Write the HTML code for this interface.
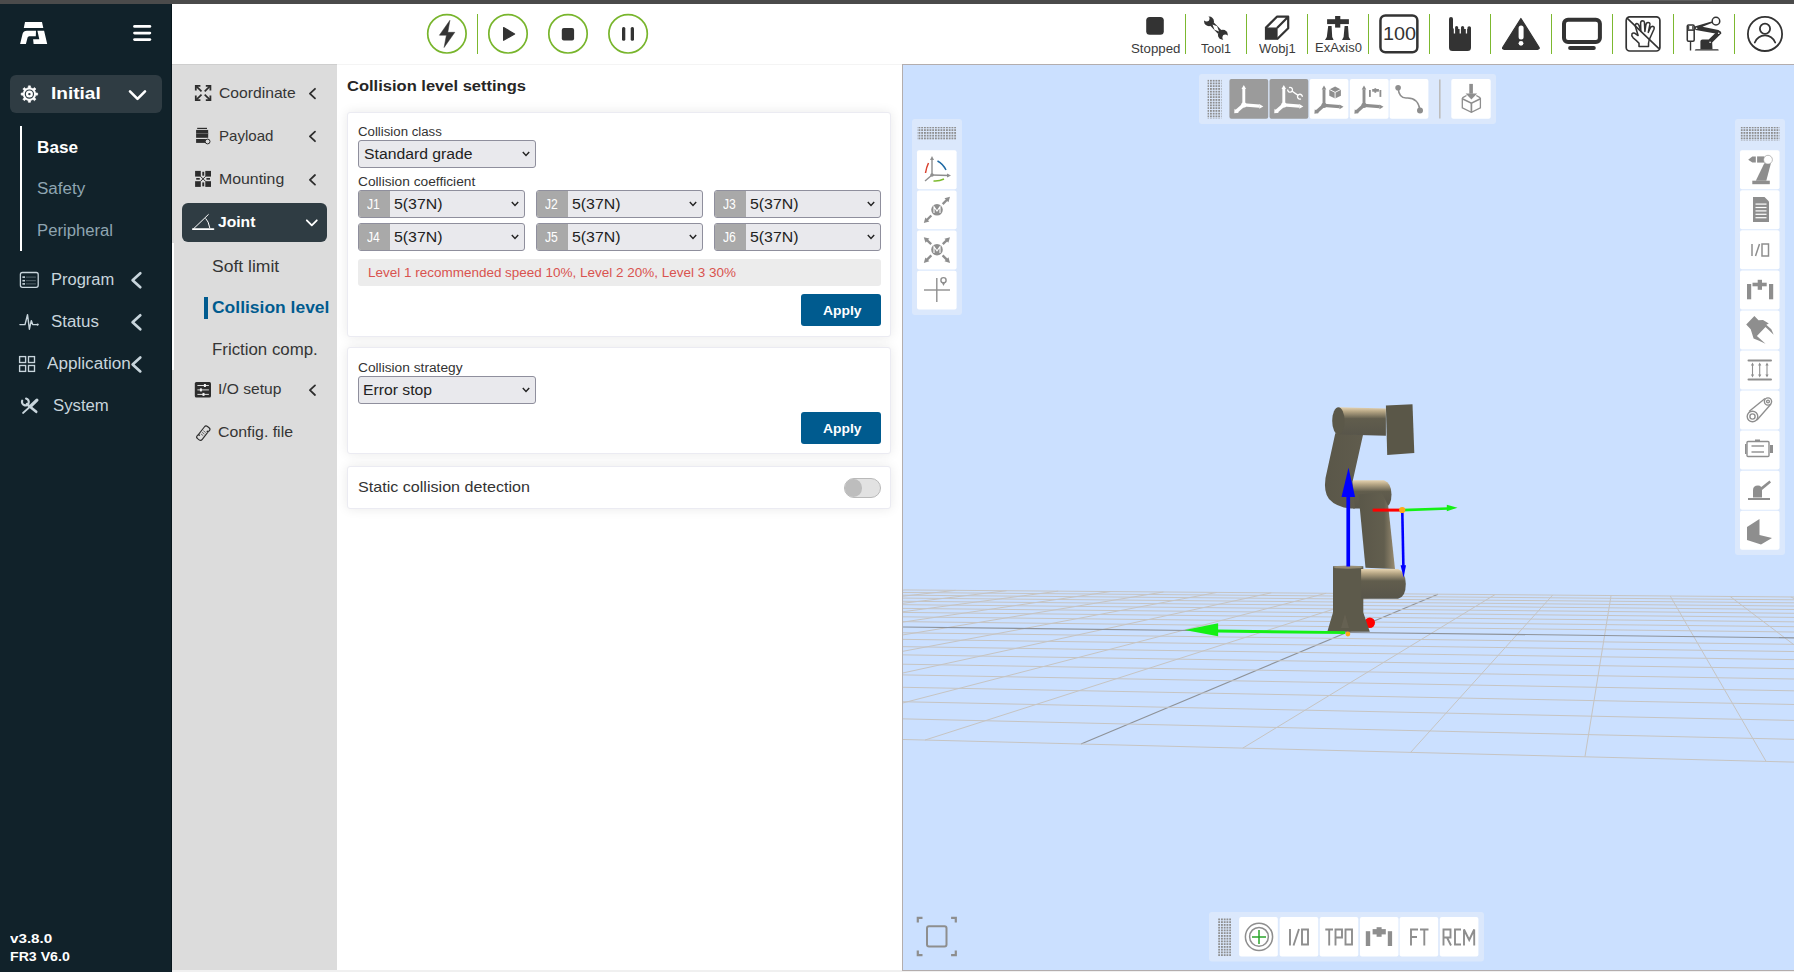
<!DOCTYPE html><html><head><meta charset="utf-8"><style>
*{margin:0;padding:0;box-sizing:border-box}
html,body{width:1794px;height:972px;overflow:hidden;background:#fff;font-family:"Liberation Sans",sans-serif}
.a{position:absolute}
.t{position:absolute;white-space:nowrap;line-height:1;transform-origin:0 0}
svg{position:absolute;overflow:visible}
</style></head><body>
<div class="a" style="left:0;top:0;width:1794px;height:4px;background:#4b4b4b"></div>
<div class="a" style="left:1630px;top:0;width:82px;height:1px;background:#5e5e5e"></div>
<div class="a" style="left:0;top:4px;width:172px;height:968px;background:#11222a"></div>
<div class="a" style="left:171px;top:4px;width:1px;height:968px;background:#07151c"></div>
<div class="a" style="left:337px;top:64px;width:565px;height:1px;background:#f4f4f4"></div>
<div class="a" style="left:172px;top:64px;width:165px;height:906px;background:#dcdcdc;border-top:1px solid #cecece"></div>
<div class="a" style="left:172px;top:243px;width:2px;height:127px;background:#fff"></div>
<div class="a" style="left:172px;top:970px;width:1622px;height:2px;background:#f0f0f0"></div>
<div class="a" style="left:902px;top:64px;width:892px;height:907px;background:#cbe0ff;border-left:1px solid #b3adad;border-top:1px solid #b3adad;border-bottom:1px solid #b3adad"></div>
<div class="a" style="left:10px;top:75px;width:152px;height:38px;background:#2f3c43;border-radius:6px"></div>
<div class="t" style="left:51px;top:84.71px;font-size:17px;color:#fff;font-weight:bold;transform:scaleX(1.1199);">Initial</div>
<div class="a" style="left:20px;top:126px;width:2px;height:125px;background:#fff"></div>
<div class="t" style="left:37.4px;top:139.03px;font-size:16.5px;color:#fff;font-weight:bold;transform:scaleX(1.0392);">Base</div>
<div class="t" style="left:37.4px;top:180.96px;font-size:16px;color:#8fa5b1;font-weight:normal;transform:scaleX(1.0624);">Safety</div>
<div class="t" style="left:37.4px;top:222.76px;font-size:16px;color:#8fa5b1;font-weight:normal;transform:scaleX(1.0429);">Peripheral</div>
<div class="t" style="left:51.3px;top:271.56px;font-size:16px;color:#c8d5dc;font-weight:normal;transform:scaleX(1.0309);">Program</div>
<div class="t" style="left:51.3px;top:313.56px;font-size:16px;color:#c8d5dc;font-weight:normal;transform:scaleX(1.0556);">Status</div>
<div class="t" style="left:46.9px;top:355.56px;font-size:16px;color:#c8d5dc;font-weight:normal;transform:scaleX(1.0705);">Application</div>
<div class="t" style="left:53px;top:397.56px;font-size:16px;color:#c8d5dc;font-weight:normal;transform:scaleX(1.0455);">System</div>
<div class="t" style="left:10px;top:932.94px;font-size:12px;color:#fff;font-weight:bold;transform:scaleX(1.2663);">v3.8.0</div>
<div class="t" style="left:10px;top:950.64px;font-size:12px;color:#fff;font-weight:bold;transform:scaleX(1.1792);">FR3 V6.0</div>
<div class="t" style="left:218.5px;top:86.23px;font-size:14.5px;color:#353535;font-weight:normal;transform:scaleX(1.0812);">Coordinate</div>
<div class="t" style="left:218.5px;top:128.73px;font-size:14.5px;color:#353535;font-weight:normal;transform:scaleX(1.0391);">Payload</div>
<div class="t" style="left:218.5px;top:171.93px;font-size:14.5px;color:#353535;font-weight:normal;transform:scaleX(1.0931);">Mounting</div>
<div class="a" style="left:182px;top:203px;width:145px;height:39px;background:#2f3c43;border-radius:6px"></div>
<div class="t" style="left:218px;top:215.03px;font-size:14.5px;color:#fff;font-weight:bold;transform:scaleX(1.0795);">Joint</div>
<div class="t" style="left:211.5px;top:259.26px;font-size:16px;color:#353535;font-weight:normal;transform:scaleX(1.0959);">Soft limit</div>
<div class="a" style="left:204px;top:297px;width:4px;height:22px;background:#005b8f"></div>
<div class="t" style="left:211.5px;top:300.46px;font-size:16px;color:#005b8f;font-weight:bold;transform:scaleX(1.0913);">Collision level</div>
<div class="t" style="left:211.5px;top:342.36px;font-size:16px;color:#353535;font-weight:normal;transform:scaleX(1.0529);">Friction comp.</div>
<div class="t" style="left:218.4px;top:382.13px;font-size:14.5px;color:#353535;font-weight:normal;transform:scaleX(1.0773);">I/O setup</div>
<div class="t" style="left:218.4px;top:425.13px;font-size:14.5px;color:#353535;font-weight:normal;transform:scaleX(1.0948);">Config. file</div>
<div class="t" style="left:347.4px;top:79.15px;font-size:14px;color:#262626;font-weight:bold;transform:scaleX(1.1796);">Collision level settings</div>
<div class="a" style="left:347px;top:112px;width:544px;height:225px;background:#fff;border-radius:3px;border:1px solid #ebebf2;box-shadow:0 0 12px rgba(0,0,0,0.09)"></div>
<div class="a" style="left:347px;top:347px;width:544px;height:107px;background:#fff;border-radius:3px;border:1px solid #ebebf2;box-shadow:0 0 12px rgba(0,0,0,0.09)"></div>
<div class="a" style="left:347px;top:466px;width:544px;height:43px;background:#fff;border-radius:3px;border:1px solid #ebebf2;box-shadow:0 0 12px rgba(0,0,0,0.09)"></div>
<div class="t" style="left:358.4px;top:125.74px;font-size:12px;color:#333;font-weight:normal;transform:scaleX(1.1025);">Collision class</div>
<div class="a" style="left:358px;top:140px;width:178px;height:28px;background:#e9e9ed;border:1px solid #8f8f9d;border-radius:3px"></div>
<div class="t" style="left:363.5px;top:147.15px;font-size:14px;color:#222;font-weight:normal;transform:scaleX(1.1251);">Standard grade</div>
<svg style="left:522px;top:151.0px" width="8" height="6"><path d="M0.8 1 L4 4.5 L7.2 1" fill="none" stroke="#222" stroke-width="1.4"/></svg>
<div class="t" style="left:358.4px;top:175.54px;font-size:12px;color:#333;font-weight:normal;transform:scaleX(1.1440);">Collision coefficient</div>
<div class="a" style="left:358px;top:190px;width:167px;height:28px;background:#e9e9ed;border:1px solid #8f8f9d;border-radius:3px;overflow:hidden"><div class="a" style="left:0;top:0;width:31px;height:28px;background:#a9a9a9"></div></div>
<div class="t" style="left:367px;top:197.15px;font-size:14px;color:#fff;font-weight:normal;transform:scaleX(0.8685);">J1</div>
<div class="t" style="left:394px;top:197.15px;font-size:14px;color:#222;font-weight:normal;transform:scaleX(1.1335);">5(37N)</div>
<svg style="left:511px;top:201px" width="8" height="6"><path d="M0.8 1 L4 4.5 L7.2 1" fill="none" stroke="#222" stroke-width="1.4"/></svg>
<div class="a" style="left:536px;top:190px;width:167px;height:28px;background:#e9e9ed;border:1px solid #8f8f9d;border-radius:3px;overflow:hidden"><div class="a" style="left:0;top:0;width:31px;height:28px;background:#a9a9a9"></div></div>
<div class="t" style="left:545px;top:197.15px;font-size:14px;color:#fff;font-weight:normal;transform:scaleX(0.8685);">J2</div>
<div class="t" style="left:572px;top:197.15px;font-size:14px;color:#222;font-weight:normal;transform:scaleX(1.1335);">5(37N)</div>
<svg style="left:689px;top:201px" width="8" height="6"><path d="M0.8 1 L4 4.5 L7.2 1" fill="none" stroke="#222" stroke-width="1.4"/></svg>
<div class="a" style="left:714px;top:190px;width:167px;height:28px;background:#e9e9ed;border:1px solid #8f8f9d;border-radius:3px;overflow:hidden"><div class="a" style="left:0;top:0;width:31px;height:28px;background:#a9a9a9"></div></div>
<div class="t" style="left:723px;top:197.15px;font-size:14px;color:#fff;font-weight:normal;transform:scaleX(0.8685);">J3</div>
<div class="t" style="left:750px;top:197.15px;font-size:14px;color:#222;font-weight:normal;transform:scaleX(1.1335);">5(37N)</div>
<svg style="left:867px;top:201px" width="8" height="6"><path d="M0.8 1 L4 4.5 L7.2 1" fill="none" stroke="#222" stroke-width="1.4"/></svg>
<div class="a" style="left:358px;top:223px;width:167px;height:28px;background:#e9e9ed;border:1px solid #8f8f9d;border-radius:3px;overflow:hidden"><div class="a" style="left:0;top:0;width:31px;height:28px;background:#a9a9a9"></div></div>
<div class="t" style="left:367px;top:230.15px;font-size:14px;color:#fff;font-weight:normal;transform:scaleX(0.8685);">J4</div>
<div class="t" style="left:394px;top:230.15px;font-size:14px;color:#222;font-weight:normal;transform:scaleX(1.1335);">5(37N)</div>
<svg style="left:511px;top:234px" width="8" height="6"><path d="M0.8 1 L4 4.5 L7.2 1" fill="none" stroke="#222" stroke-width="1.4"/></svg>
<div class="a" style="left:536px;top:223px;width:167px;height:28px;background:#e9e9ed;border:1px solid #8f8f9d;border-radius:3px;overflow:hidden"><div class="a" style="left:0;top:0;width:31px;height:28px;background:#a9a9a9"></div></div>
<div class="t" style="left:545px;top:230.15px;font-size:14px;color:#fff;font-weight:normal;transform:scaleX(0.8685);">J5</div>
<div class="t" style="left:572px;top:230.15px;font-size:14px;color:#222;font-weight:normal;transform:scaleX(1.1335);">5(37N)</div>
<svg style="left:689px;top:234px" width="8" height="6"><path d="M0.8 1 L4 4.5 L7.2 1" fill="none" stroke="#222" stroke-width="1.4"/></svg>
<div class="a" style="left:714px;top:223px;width:167px;height:28px;background:#e9e9ed;border:1px solid #8f8f9d;border-radius:3px;overflow:hidden"><div class="a" style="left:0;top:0;width:31px;height:28px;background:#a9a9a9"></div></div>
<div class="t" style="left:723px;top:230.15px;font-size:14px;color:#fff;font-weight:normal;transform:scaleX(0.8685);">J6</div>
<div class="t" style="left:750px;top:230.15px;font-size:14px;color:#222;font-weight:normal;transform:scaleX(1.1335);">5(37N)</div>
<svg style="left:867px;top:234px" width="8" height="6"><path d="M0.8 1 L4 4.5 L7.2 1" fill="none" stroke="#222" stroke-width="1.4"/></svg>
<div class="a" style="left:358px;top:259px;width:523px;height:27px;background:#ececec;border-radius:3px"></div>
<div class="t" style="left:368.1px;top:266.62px;font-size:12.5px;color:#d9534f;font-weight:normal;transform:scaleX(1.0784);">Level 1 recommended speed 10%, Level 2 20%, Level 3 30%</div>
<div class="a" style="left:801px;top:294px;width:80px;height:32px;background:#005b8f;border-radius:3px"></div>
<div class="t" style="left:822.5px;top:304.17px;font-size:13.5px;color:#fff;font-weight:bold;transform:scaleX(1.0254);">Apply</div>
<div class="t" style="left:358.4px;top:362.04px;font-size:12px;color:#333;font-weight:normal;transform:scaleX(1.1443);">Collision strategy</div>
<div class="a" style="left:358px;top:376px;width:178px;height:28px;background:#e9e9ed;border:1px solid #8f8f9d;border-radius:3px"></div>
<div class="t" style="left:363.4px;top:382.55px;font-size:14px;color:#222;font-weight:normal;transform:scaleX(1.1242);">Error stop</div>
<svg style="left:522px;top:387.0px" width="8" height="6"><path d="M0.8 1 L4 4.5 L7.2 1" fill="none" stroke="#222" stroke-width="1.4"/></svg>
<div class="a" style="left:801px;top:412px;width:80px;height:32px;background:#005b8f;border-radius:3px"></div>
<div class="t" style="left:822.5px;top:421.97px;font-size:13.5px;color:#fff;font-weight:bold;transform:scaleX(1.0254);">Apply</div>
<div class="t" style="left:358.4px;top:478.90px;font-size:15px;color:#333;font-weight:normal;transform:scaleX(1.0739);">Static collision detection</div>
<div class="a" style="left:844px;top:478px;width:37px;height:20px;background:#e2e2e2;border:1px solid #b9b9b9;border-radius:10px"></div>
<div class="a" style="left:845px;top:479px;width:17px;height:18px;background:#bdbdbd;border-radius:9px"></div>
<div class="t" style="left:1130.6px;top:42.74px;font-size:12px;color:#3a3a3a;font-weight:normal;transform:scaleX(1.1053);">Stopped</div>
<div class="t" style="left:1201.2px;top:42.74px;font-size:12px;color:#3a3a3a;font-weight:normal;transform:scaleX(1.0486);">Tool1</div>
<div class="t" style="left:1258.8px;top:42.74px;font-size:12px;color:#3a3a3a;font-weight:normal;transform:scaleX(1.0832);">Wobj1</div>
<div class="t" style="left:1315.2px;top:42.44px;font-size:12px;color:#3a3a3a;font-weight:normal;transform:scaleX(1.0819);">ExAxis0</div>
<div class="t" style="left:1383px;top:26.39px;font-size:17.5px;color:#333;font-weight:normal;transform:scaleX(1.1330);">100</div>
<div class="a" style="left:1184.9px;top:14px;width:1.3px;height:40px;background:#7cb82f"></div>
<div class="a" style="left:1246.0px;top:14px;width:1.3px;height:40px;background:#7cb82f"></div>
<div class="a" style="left:1307.0px;top:14px;width:1.3px;height:40px;background:#7cb82f"></div>
<div class="a" style="left:1368.0px;top:14px;width:1.3px;height:40px;background:#7cb82f"></div>
<div class="a" style="left:1429.0px;top:14px;width:1.3px;height:40px;background:#7cb82f"></div>
<div class="a" style="left:1490.0px;top:14px;width:1.3px;height:40px;background:#7cb82f"></div>
<div class="a" style="left:1551.0px;top:14px;width:1.3px;height:40px;background:#7cb82f"></div>
<div class="a" style="left:1612.0px;top:14px;width:1.3px;height:40px;background:#7cb82f"></div>
<div class="a" style="left:1673.0px;top:14px;width:1.3px;height:40px;background:#7cb82f"></div>
<div class="a" style="left:1734.0px;top:14px;width:1.3px;height:40px;background:#7cb82f"></div>
<div class="a" style="left:477px;top:14px;width:1.3px;height:40px;background:#7cb82f"></div>
<svg style="left:0;top:0" width="1794" height="972" viewBox="0 0 1794 972"><polygon points="25,22 42,22 43.3,28 23.8,28" fill="#ffffff"/><path d="M20.1 44.1 L22.6 33.8 Q23.4 30.8 27 30.8 L36 30.8 L35.8 36.2 L29.2 36.2 Q27.9 36.3 27.6 37.6 L25.9 44.1 Z" fill="#ffffff"/><polygon points="37.4,30.8 44.1,30.8 47.2,44.1 33.6,44.1 33.1,39.3 39.3,39.3" fill="#ffffff"/><line x1="134.6" y1="26.4" x2="149.8" y2="26.4" stroke="#ffffff" stroke-width="2.9" stroke-linecap="round"/><line x1="134.6" y1="33.1" x2="149.8" y2="33.1" stroke="#ffffff" stroke-width="2.9" stroke-linecap="round"/><line x1="134.6" y1="39.6" x2="149.8" y2="39.6" stroke="#ffffff" stroke-width="2.9" stroke-linecap="round"/><polygon points="26.95,88.19 28.18,87.82 28.39,85.86 30.41,85.86 30.62,87.82 31.85,88.19 32.98,88.79 34.51,87.56 35.94,88.99 34.71,90.52 35.31,91.65 35.68,92.88 37.64,93.09 37.64,95.11 35.68,95.32 35.31,96.55 34.71,97.68 35.94,99.21 34.51,100.64 32.98,99.41 31.85,100.01 30.62,100.38 30.41,102.34 28.39,102.34 28.18,100.38 26.95,100.01 25.82,99.41 24.29,100.64 22.86,99.21 24.09,97.68 23.49,96.55 23.12,95.32 21.16,95.11 21.16,93.09 23.12,92.88 23.49,91.65 24.09,90.52 22.86,88.99 24.29,87.56 25.82,88.79" fill="#fff" stroke="#fff" stroke-width="0.6" stroke-linejoin="round"/><circle cx="29.4" cy="94.1" r="4.1" fill="none" stroke="#2f3c43" stroke-width="1.2"/><circle cx="29.4" cy="94.1" r="1.2" fill="#2f3c43"/><polyline points="130,91.3 137.5,98.8 145,91.3" fill="none" stroke="#ffffff" stroke-width="2.6" stroke-linecap="round" stroke-linejoin="round"/><rect x="20.4" y="272.5" width="17.8" height="14.8" rx="2" fill="none" stroke="#c8d5dc" stroke-width="1.3"/><rect x="22.4" y="276.3" width="2.6" height="1.6" fill="#c8d5dc"/><line x1="25.8" y1="277.1" x2="35.9" y2="277.1" stroke="#55656c" stroke-width="1"/><rect x="22.4" y="279.9" width="2.6" height="1.6" fill="#c8d5dc"/><line x1="25.8" y1="280.7" x2="35.9" y2="280.7" stroke="#55656c" stroke-width="1"/><rect x="22.4" y="283.09999999999997" width="2.6" height="1.6" fill="#c8d5dc"/><line x1="25.8" y1="283.9" x2="35.9" y2="283.9" stroke="#55656c" stroke-width="1"/><polyline points="19.9,324.6 25,324.6 27.5,314.6 29.4,329.2 31.3,320.6 32.7,324.6 37.8,324.6" fill="none" stroke="#c8d5dc" stroke-width="1.4" stroke-linejoin="round" stroke-linecap="round"/><circle cx="37.6" cy="324.6" r="1.1" fill="#c8d5dc"/><rect x="19.6" y="356.6" width="6" height="5.9" fill="none" stroke="#c8d5dc" stroke-width="1.35"/><rect x="19.6" y="365.5" width="6" height="5.9" fill="none" stroke="#c8d5dc" stroke-width="1.35"/><rect x="28.5" y="356.6" width="6" height="5.9" fill="none" stroke="#c8d5dc" stroke-width="1.35"/><rect x="28.5" y="365.5" width="6" height="5.9" fill="none" stroke="#c8d5dc" stroke-width="1.35"/><line x1="36.9" y1="400.2" x2="30.8" y2="406" stroke="#c8d5dc" stroke-width="3.2" stroke-linecap="round"/><line x1="30.8" y1="406" x2="23" y2="413" stroke="#c8d5dc" stroke-width="1.7" stroke-linecap="round"/><line x1="27" y1="404.2" x2="36.2" y2="411.8" stroke="#c8d5dc" stroke-width="2.6" stroke-linecap="round"/><path d="M22.2 400.7 A3.4 3.4 0 1 0 26.1 398.6" fill="none" stroke="#c8d5dc" stroke-width="2.2" stroke-linecap="round"/><polyline points="140.3,273.2 132.6,280.2 140.3,287.2" fill="none" stroke="#c8d5dc" stroke-width="2.7" stroke-linecap="round" stroke-linejoin="round"/><polyline points="140.3,315.3 132.6,322.3 140.3,329.3" fill="none" stroke="#c8d5dc" stroke-width="2.7" stroke-linecap="round" stroke-linejoin="round"/><polyline points="140.3,357.4 132.6,364.4 140.3,371.4" fill="none" stroke="#c8d5dc" stroke-width="2.7" stroke-linecap="round" stroke-linejoin="round"/><line x1="201.5" y1="91.4" x2="196.39999999999998" y2="86.39999999999999" stroke="#2d2d2d" stroke-width="1.7"/><polyline points="195.79999999999998,90.39999999999999 195.79999999999998,85.8 200.39999999999998,85.8" fill="none" stroke="#2d2d2d" stroke-width="1.8"/><line x1="201.5" y1="94.6" x2="196.39999999999998" y2="99.60000000000001" stroke="#2d2d2d" stroke-width="1.7"/><polyline points="195.79999999999998,95.60000000000001 195.79999999999998,100.2 200.39999999999998,100.2" fill="none" stroke="#2d2d2d" stroke-width="1.8"/><line x1="204.7" y1="91.4" x2="209.8" y2="86.39999999999999" stroke="#2d2d2d" stroke-width="1.7"/><polyline points="210.4,90.39999999999999 210.4,85.8 205.8,85.8" fill="none" stroke="#2d2d2d" stroke-width="1.8"/><line x1="204.7" y1="94.6" x2="209.8" y2="99.60000000000001" stroke="#2d2d2d" stroke-width="1.7"/><polyline points="210.4,95.60000000000001 210.4,100.2 205.8,100.2" fill="none" stroke="#2d2d2d" stroke-width="1.8"/><rect x="197.2" y="127.8" width="9.8" height="1.2" fill="#2d2d2d"/><rect x="196.1" y="129.9" width="12.1" height="7.9" fill="#2d2d2d"/><rect x="196.1" y="133.2" width="12.1" height="0.7" fill="#777"/><rect x="196.1" y="139" width="12.1" height="3.9" fill="#2d2d2d"/><circle cx="207.6" cy="141.5" r="2.4" fill="#dcdcdc" stroke="#2d2d2d" stroke-width="1"/><rect x="195.1" y="170.9" width="5.7" height="5.7" fill="#2d2d2d"/><rect x="195.1" y="181.2" width="5.7" height="5.7" fill="#2d2d2d"/><rect x="205.3" y="170.9" width="5.7" height="5.7" fill="#2d2d2d"/><rect x="205.3" y="181.2" width="5.7" height="5.7" fill="#2d2d2d"/><rect x="202.3" y="171.8" width="1.9" height="3.9" fill="#2d2d2d"/><rect x="202.3" y="182.4" width="1.9" height="3.9" fill="#2d2d2d"/><rect x="196.2" y="178" width="3.6" height="1.7" fill="#2d2d2d"/><rect x="206.4" y="178" width="3.6" height="1.7" fill="#2d2d2d"/><line x1="200.5" y1="176.3" x2="205.6" y2="181.4" stroke="#2d2d2d" stroke-width="1"/><line x1="205.6" y1="176.3" x2="200.5" y2="181.4" stroke="#2d2d2d" stroke-width="1"/><line x1="192.8" y1="229.1" x2="213.5" y2="229.1" stroke="#ffffff" stroke-width="1.7" stroke-linecap="round"/><line x1="193.3" y1="229" x2="208.6" y2="214.3" stroke="#ffffff" stroke-width="1"/><path d="M205.6 218.4 Q208.5 221 209.8 228" fill="none" stroke="#ffffff" stroke-width="1"/><polyline points="306.8,220.3 311.8,225.4 316.8,220.3" fill="none" stroke="#ffffff" stroke-width="1.8" stroke-linecap="round" stroke-linejoin="round"/><polyline points="315,88.8 309.9,93.6 315,98.39999999999999" fill="none" stroke="#2d2d2d" stroke-width="1.8" stroke-linecap="round" stroke-linejoin="round"/><polyline points="315,131.6 309.9,136.4 315,141.20000000000002" fill="none" stroke="#2d2d2d" stroke-width="1.8" stroke-linecap="round" stroke-linejoin="round"/><polyline points="315,175.0 309.9,179.8 315,184.60000000000002" fill="none" stroke="#2d2d2d" stroke-width="1.8" stroke-linecap="round" stroke-linejoin="round"/><polyline points="315,385.4 309.9,390.2 315,395.0" fill="none" stroke="#2d2d2d" stroke-width="1.8" stroke-linecap="round" stroke-linejoin="round"/><rect x="194.8" y="382.1" width="16.2" height="15.5" rx="1.5" fill="#2d2d2d"/><line x1="197.4" y1="385.5" x2="208.9" y2="385.5" stroke="#f2f2f2" stroke-width="0.9"/><rect x="203.9" y="384.0" width="2" height="3" fill="#f2f2f2"/><line x1="197.4" y1="389.9" x2="208.9" y2="389.9" stroke="#f2f2f2" stroke-width="0.9"/><rect x="199.9" y="388.4" width="2" height="3" fill="#f2f2f2"/><line x1="197.4" y1="394.4" x2="208.9" y2="394.4" stroke="#f2f2f2" stroke-width="0.9"/><rect x="202.5" y="392.9" width="2" height="3" fill="#f2f2f2"/><g transform="translate(203.3,433.2) rotate(38)" fill="none" stroke="#2d2d2d" stroke-width="1.15"><path d="M-3 -5.5 Q-3 -7.8 -0.8 -7.8 L1.2 -7.8 Q3.3 -7.8 3.3 -5.8 Q3.3 -3.9 1.3 -3.9 L3 -3.9 L3 5.5 Q3 7.8 0.8 7.8 L-1.2 7.8 Q-3.3 7.8 -3.3 5.8 Q-3.3 3.9 -1.3 3.9 L-3 3.9 Z"/><line x1="-1.5" y1="-2" x2="1.5" y2="-2" stroke-width="0.6"/><line x1="-1.5" y1="0" x2="1.5" y2="0" stroke-width="0.6"/><line x1="-1.5" y1="2" x2="1.5" y2="2" stroke-width="0.6"/></g><circle cx="446.9" cy="33.8" r="19.2" fill="none" stroke="#78b52c" stroke-width="1.7"/><circle cx="508" cy="33.8" r="19.2" fill="none" stroke="#78b52c" stroke-width="1.7"/><circle cx="568" cy="33.8" r="19.2" fill="none" stroke="#78b52c" stroke-width="1.7"/><circle cx="628.1" cy="33.8" r="19.2" fill="none" stroke="#78b52c" stroke-width="1.7"/><path d="M449.9 20.3 L439.4 35.2 L446.4 35.2 L444.1 47.5 L454.8 32.3 L447.8 32.3 Z" fill="#333333" stroke="#333333" stroke-width="0.5" stroke-linejoin="round"/><path d="M503.6 27.6 L514.6 33.9 L503.6 40.3 Z" fill="#333333" stroke="#333333" stroke-width="1.2" stroke-linejoin="round"/><rect x="561.8" y="28.1" width="12.3" height="12.4" rx="2" fill="#333333"/><rect x="622" y="27" width="3.3" height="13.8" rx="1.5" fill="#333333"/><rect x="630.7" y="27" width="3.3" height="13.8" rx="1.5" fill="#333333"/><rect x="1146.2" y="16.9" width="17.6" height="17.9" rx="3.5" fill="#333333"/><g transform="translate(1198,12) scale(0.03291)"><circle cx="335" cy="285" r="150" fill="#333333"/><circle cx="262" cy="200" r="88" fill="#fff"/><circle cx="755" cy="690" r="150" fill="#333333"/><circle cx="830" cy="775" r="88" fill="#fff"/><line x1="420" y1="360" x2="660" y2="610" stroke="#333333" stroke-width="150"/><polygon points="440,380 580,430 640,590 500,540" fill="#fff"/></g><path d="M1265.5 28.1 L1277 28.1 L1277 39.2 L1265.5 39.2 Z" fill="#333333" stroke="#333333" stroke-width="1.2"/><path d="M1265.5 28.1 L1276.9 16.7 L1288.2 16.7 L1277 28.1 M1288.2 16.7 L1288.2 28.2 L1277 39.2" fill="none" stroke="#333333" stroke-width="2.2" stroke-linejoin="round"/><rect x="1327.1" y="19.2" width="21.8" height="4.9" fill="#333333"/><rect x="1335.1" y="16" width="5.2" height="11.6" fill="#333333"/><path d="M1328.2 26 L1331.6 26 L1332.2 37 L1333.6 40 L1325 40 L1326.8 37 Z" fill="#333333"/><path d="M1344.6 26 L1348 26 L1348.8 37 L1350.6 40 L1342 40 L1343.6 37 Z" fill="#333333"/><rect x="1380.45" y="15.45" width="36.9" height="36.9" rx="5" fill="none" stroke="#333333" stroke-width="2.5"/><path d="M1449 19 Q1449 17 1451 17 Q1453 17 1453 19 L1453 28.5 L1455 28.5 L1455 27.5 Q1455 26 1456.6 26 Q1458.2 26 1458.2 27.5 L1458.2 29 L1461 29 L1461 27.5 Q1461 26 1462.6 26 Q1464.2 26 1464.2 27.5 L1464.2 29 L1467.4 29 L1467.4 27.8 Q1467.4 26.3 1469.2 26.3 Q1471 26.3 1471 27.8 L1471 47.5 Q1471 51 1467.5 51 L1452.5 51 Q1449 51 1449 47.5 Z" fill="#333333"/><rect x="1453.8" y="27" width="1.3" height="6.5" fill="#fff"/><rect x="1459.6" y="27" width="1.3" height="6.5" fill="#fff"/><rect x="1465.8" y="27" width="1.3" height="6.5" fill="#fff"/><path d="M1520.9 18.5 L1539 47.2 Q1539.8 49.3 1537.5 49.3 L1504.2 49.3 Q1501.9 49.3 1502.8 47.2 Z" fill="#333333" stroke="#333333" stroke-width="1.2" stroke-linejoin="round"/><rect x="1518.6" y="25.6" width="5" height="14" rx="2.5" fill="#fff"/><circle cx="1521" cy="43.3" r="2.4" fill="#fff"/><rect x="1564" y="19.8" width="35.9" height="22.1" rx="4" fill="none" stroke="#333333" stroke-width="4"/><line x1="1570.1" y1="47.9" x2="1593.8" y2="47.9" stroke="#333333" stroke-width="4" stroke-linecap="round"/><rect x="1626.2" y="16.9" width="33.7" height="34.1" rx="3.6" fill="none" stroke="#333333" stroke-width="1.7"/><line x1="1626.8" y1="17.9" x2="1658.9" y2="48.7" stroke="#333333" stroke-width="1.6"/><g transform="translate(1620,12) scale(0.04527)"><path d="M420 760 L630 760 L630 690 Q640 620 660 580 L750 380 Q770 320 720 315 Q680 315 660 370 L625 450 L660 280 Q665 230 620 230 Q580 230 570 290 L550 430 L540 230 Q535 195 495 195 Q455 200 455 250 L460 420 L420 300 Q400 250 370 255 Q330 265 340 320 L400 520 L330 470 Q290 450 265 480 Q245 520 290 570 Q380 640 420 690 Z" fill="none" stroke="#333333" stroke-width="34" stroke-linejoin="round"/></g><g transform="translate(1670,8) scale(0.06911)" fill="#333333"><rect x="250" y="245" width="100" height="235" rx="18" fill="none" stroke="#333333" stroke-width="22"/><line x1="250" y1="320" x2="350" y2="320" stroke="#333333" stroke-width="22"/><line x1="270" y1="260" x2="270" y2="310" stroke="#333333" stroke-width="16"/><line x1="330" y1="260" x2="330" y2="310" stroke="#333333" stroke-width="16"/><line x1="297" y1="488" x2="297" y2="615" stroke="#333333" stroke-width="20"/><path d="M360 610 Q360 598 380 598 L690 598 Q705 598 705 615 L360 615 Z"/><path d="M440 598 L440 480 Q440 455 470 455 L560 455 L690 330 Q740 320 745 365 L610 500 L615 598 Z"/><path d="M360 300 Q340 265 380 262 L600 195 L615 215 L470 270 L700 320 Q750 345 720 380 L370 320 Z"/><circle cx="665" cy="190" r="55" fill="none" stroke="#333333" stroke-width="22"/><circle cx="385" cy="293" r="12" fill="#fff"/><circle cx="705" cy="365" r="12" fill="#fff"/><circle cx="580" cy="495" r="12" fill="#fff"/></g><circle cx="1765" cy="33.9" r="17.1" fill="none" stroke="#333333" stroke-width="1.8"/><circle cx="1765" cy="28.8" r="5.1" fill="none" stroke="#333333" stroke-width="1.8"/><path d="M1754.8 42.5 Q1758 35.4 1765 35.4 Q1772 35.4 1775.2 42.5" fill="none" stroke="#333333" stroke-width="1.8" stroke-linecap="round"/></svg>
<svg style="left:903px;top:65px;overflow:hidden" width="891" height="905" viewBox="903 65 891 905"><line x1="-263.33" y1="709.88" x2="905.02" y2="589.93" stroke="#c6c4c2" stroke-width="1"/><line x1="-147.78" y1="712.82" x2="955.49" y2="590.33" stroke="#c6c4c2" stroke-width="1"/><line x1="-28.56" y1="715.84" x2="1006.56" y2="590.73" stroke="#c6c4c2" stroke-width="1"/><line x1="94.50" y1="718.97" x2="1058.24" y2="591.14" stroke="#c6c4c2" stroke-width="1"/><line x1="221.59" y1="722.19" x2="1110.55" y2="591.56" stroke="#c6c4c2" stroke-width="1"/><line x1="352.91" y1="725.53" x2="1163.48" y2="591.98" stroke="#c6c4c2" stroke-width="1"/><line x1="488.67" y1="728.97" x2="1217.05" y2="592.40" stroke="#c6c4c2" stroke-width="1"/><line x1="629.10" y1="732.54" x2="1271.28" y2="592.83" stroke="#c6c4c2" stroke-width="1"/><line x1="774.46" y1="736.23" x2="1326.17" y2="593.27" stroke="#c6c4c2" stroke-width="1"/><line x1="925.00" y1="740.05" x2="1381.74" y2="593.71" stroke="#c6c4c2" stroke-width="1"/><line x1="1081.00" y1="744.01" x2="1438.00" y2="594.16" stroke="#8e9298" stroke-width="1.1"/><line x1="1242.77" y1="748.12" x2="1494.97" y2="594.61" stroke="#c6c4c2" stroke-width="1"/><line x1="1410.63" y1="752.38" x2="1552.65" y2="595.07" stroke="#c6c4c2" stroke-width="1"/><line x1="1584.94" y1="756.81" x2="1611.06" y2="595.53" stroke="#c6c4c2" stroke-width="1"/><line x1="1766.08" y1="761.40" x2="1670.22" y2="596.00" stroke="#c6c4c2" stroke-width="1"/><line x1="1954.44" y1="766.19" x2="1730.14" y2="596.48" stroke="#c6c4c2" stroke-width="1"/><line x1="2150.48" y1="771.16" x2="1790.83" y2="596.96" stroke="#c6c4c2" stroke-width="1"/><line x1="2354.67" y1="776.35" x2="1852.31" y2="597.45" stroke="#c6c4c2" stroke-width="1"/><line x1="2567.53" y1="781.75" x2="1914.59" y2="597.94" stroke="#c6c4c2" stroke-width="1"/><line x1="2789.63" y1="787.39" x2="1977.69" y2="598.44" stroke="#c6c4c2" stroke-width="1"/><line x1="3021.58" y1="793.28" x2="2041.63" y2="598.95" stroke="#c6c4c2" stroke-width="1"/><line x1="-263.33" y1="709.88" x2="3021.58" y2="793.28" stroke="#c6c4c2" stroke-width="1"/><line x1="-121.50" y1="695.32" x2="2874.84" y2="764.18" stroke="#c6c4c2" stroke-width="1"/><line x1="0.50" y1="682.79" x2="2755.99" y2="740.61" stroke="#c6c4c2" stroke-width="1"/><line x1="106.56" y1="671.91" x2="2657.77" y2="721.13" stroke="#c6c4c2" stroke-width="1"/><line x1="199.62" y1="662.35" x2="2575.23" y2="704.76" stroke="#c6c4c2" stroke-width="1"/><line x1="281.92" y1="653.90" x2="2504.89" y2="690.82" stroke="#c6c4c2" stroke-width="1"/><line x1="355.23" y1="646.37" x2="2444.24" y2="678.79" stroke="#c6c4c2" stroke-width="1"/><line x1="420.94" y1="639.63" x2="2391.40" y2="668.31" stroke="#c6c4c2" stroke-width="1"/><line x1="480.18" y1="633.55" x2="2344.96" y2="659.10" stroke="#c6c4c2" stroke-width="1"/><line x1="533.86" y1="628.03" x2="2303.82" y2="650.94" stroke="#c6c4c2" stroke-width="1"/><line x1="582.73" y1="623.02" x2="2267.12" y2="643.66" stroke="#8e9298" stroke-width="1.1"/><line x1="627.40" y1="618.43" x2="2234.18" y2="637.13" stroke="#c6c4c2" stroke-width="1"/><line x1="668.40" y1="614.22" x2="2204.44" y2="631.24" stroke="#c6c4c2" stroke-width="1"/><line x1="706.16" y1="610.34" x2="2177.47" y2="625.89" stroke="#c6c4c2" stroke-width="1"/><line x1="741.05" y1="606.76" x2="2152.90" y2="621.01" stroke="#c6c4c2" stroke-width="1"/><line x1="773.38" y1="603.44" x2="2130.41" y2="616.56" stroke="#c6c4c2" stroke-width="1"/><line x1="803.43" y1="600.36" x2="2109.76" y2="612.46" stroke="#c6c4c2" stroke-width="1"/><line x1="831.42" y1="597.48" x2="2090.73" y2="608.69" stroke="#c6c4c2" stroke-width="1"/><line x1="857.57" y1="594.80" x2="2073.13" y2="605.20" stroke="#c6c4c2" stroke-width="1"/><line x1="882.05" y1="592.29" x2="2056.81" y2="601.96" stroke="#c6c4c2" stroke-width="1"/><line x1="905.02" y1="589.93" x2="2041.63" y2="598.95" stroke="#c6c4c2" stroke-width="1"/><defs><linearGradient id="cylH" x1="0" y1="0" x2="0" y2="1"><stop offset="0" stop-color="#e6d3b0"/><stop offset="0.15" stop-color="#b5a584"/><stop offset="0.4" stop-color="#615d4d"/><stop offset="1" stop-color="#58554a"/></linearGradient><linearGradient id="armV" x1="0" y1="0" x2="1" y2="0"><stop offset="0" stop-color="#5a5749"/><stop offset="0.7" stop-color="#625e4e"/><stop offset="1" stop-color="#9a8d72"/></linearGradient><linearGradient id="armU" x1="0" y1="0" x2="1" y2="0"><stop offset="0" stop-color="#5a5749"/><stop offset="1" stop-color="#605c4d"/></linearGradient></defs><circle cx="1369.8" cy="622.8" r="5.2" fill="#ff0000"/><path d="M1333 566.3 L1363.3 566.3 L1363.3 612.4 L1369.8 631.8 L1327.3 631.8 L1333 612.4 Z" fill="#5d5a4b"/><path d="M1345 614 L1349 628 L1341 628 Z" fill="#6a6656" opacity="0.6"/><ellipse cx="1348" cy="567.2" rx="14.5" ry="1.6" fill="#a09478" opacity="0.85"/><path d="M1361.1 569.1 L1398 569.1 Q1405.8 572 1405.8 583.9 Q1405.8 597 1398 598.7 L1361.1 598.7 Z" fill="url(#cylH)"/><path d="M1353 480.2 L1384 480.2 Q1391.5 483 1391.5 494.4 Q1391.5 506 1384 508.6 L1353 508.6 Z" fill="url(#cylH)"/><path d="M1358.5 494.5 L1381.5 492 L1388.2 506 L1395 569.1 L1365.5 567.7 Z" fill="url(#armV)"/><path d="M1335.3 433.3 L1363.1 434.5 L1352.6 481.4 L1355 508.6 L1350.7 508.6 Q1336 507 1329 499 Q1323.5 492 1325.5 478 Z" fill="url(#armU)"/><path d="M1339.6 407.3 L1385.9 408.6 L1385.9 435.7 L1339.6 434.5 Z" fill="url(#cylH)"/><ellipse cx="1338.4" cy="420.9" rx="6.2" ry="13.6" fill="#5b5849"/><path d="M1385.9 405.5 L1412.5 404.3 L1414.3 453 L1387.2 454.9 Z" fill="#5a5748"/><rect x="1346.4" y="494" width="3.7" height="72.5" fill="#0000ff"/><path d="M1348.5 467.8 L1355.1 496.9 L1341.5 496.9 Z" fill="#0000ff"/><line x1="1372.7" y1="510.1" x2="1402.2" y2="510.1" stroke="#ff0000" stroke-width="3"/><line x1="1402.2" y1="510.1" x2="1448" y2="508.5" stroke="#14f014" stroke-width="2.6"/><path d="M1457.5 507.7 L1446.8 504.8 L1446.8 511.3 Z" fill="#14f014"/><line x1="1402.3" y1="512" x2="1403.4" y2="567" stroke="#0000ff" stroke-width="2.6"/><path d="M1403.6 577.8 L1400.6 565.3 L1406 565.3 Z" fill="#0000ff"/><circle cx="1402.2" cy="510" r="3.1" fill="#ffa81a"/><path d="M1345 631.3 L1218 629.4 L1218 632.6 L1345 634 Z" fill="#14f014"/><path d="M1184.7 629.9 L1218.1 623.3 L1218.1 636.3 Z" fill="#14f014"/><circle cx="1347.9" cy="634" r="2.4" fill="#ffa81a"/><defs><pattern id="dotp" x="0" y="0" width="2.75" height="2.75" patternUnits="userSpaceOnUse"><rect x="0" y="0" width="1.8" height="1.8" fill="#8c8c8c"/></pattern></defs><rect x="1199" y="74" width="297" height="50" rx="3" fill="#dbe8fc"/><rect x="1207.5" y="79.5" width="14.0" height="39.0" fill="url(#dotp)"/><rect x="1229.4" y="79" width="38.8" height="39.7" rx="2" fill="#9b9b9b"/><rect x="1269.5" y="79" width="38.8" height="39.7" rx="2" fill="#9b9b9b"/><rect x="1309.6" y="79" width="38.8" height="39.7" rx="2" fill="#ffffff"/><rect x="1349.8" y="79" width="38.8" height="39.7" rx="2" fill="#ffffff"/><rect x="1389.6" y="79" width="38.8" height="39.7" rx="2" fill="#ffffff"/><rect x="1439" y="79.5" width="1.6" height="39" fill="#bdbdbd"/><rect x="1451.3" y="79" width="39.4" height="39.7" rx="2" fill="#ffffff"/><line x1="1243.8" y1="104.9" x2="1243.8" y2="88.9" stroke="#ffffff" stroke-width="2.9"/><path d="M1243.8 85.10000000000001 L1246.1 89.10000000000001 L1241.5 89.10000000000001 Z" fill="#ffffff"/><line x1="1243.8" y1="104.9" x2="1259.5" y2="106.2" stroke="#ffffff" stroke-width="3.1999999999999997"/><path d="M1263.3 106.4 L1259.3 108.80000000000001 L1259.3 104.0 Z" fill="#ffffff"/><line x1="1243.8" y1="104.9" x2="1235.8" y2="111.9" stroke="#ffffff" stroke-width="3.4"/><path d="M1234.2 113.30000000000001 L1234.6 108.80000000000001 L1238.8 112.7 Z" fill="#ffffff"/><circle cx="1243.8" cy="104.9" r="2.6" fill="#ffffff"/><line x1="1283.8" y1="104.9" x2="1283.8" y2="88.9" stroke="#ffffff" stroke-width="2.9"/><path d="M1283.8 85.10000000000001 L1286.1 89.10000000000001 L1281.5 89.10000000000001 Z" fill="#ffffff"/><line x1="1283.8" y1="104.9" x2="1299.5" y2="106.2" stroke="#ffffff" stroke-width="3.1999999999999997"/><path d="M1303.3 106.4 L1299.3 108.80000000000001 L1299.3 104.0 Z" fill="#ffffff"/><line x1="1283.8" y1="104.9" x2="1275.8" y2="111.9" stroke="#ffffff" stroke-width="3.4"/><path d="M1274.2 113.30000000000001 L1274.6 108.80000000000001 L1278.8 112.7 Z" fill="#ffffff"/><circle cx="1283.8" cy="104.9" r="2.6" fill="#ffffff"/><g transform="translate(1295,93.2) rotate(35)" fill="none" stroke="#fff" stroke-width="1.3"><line x1="-3.8" y1="0" x2="3.8" y2="0"/><path d="M-8.08 1.2 A2.4 2.4 0 1 0 -8.08 -1.2"/><path d="M8.08 1.2 A2.4 2.4 0 1 1 8.08 -1.2"/></g><line x1="1324" y1="105.3" x2="1324" y2="89.3" stroke="#8e8e8e" stroke-width="2.9"/><path d="M1324 85.5 L1326.3 89.5 L1321.7 89.5 Z" fill="#8e8e8e"/><line x1="1324" y1="105.3" x2="1339.7" y2="106.6" stroke="#8e8e8e" stroke-width="3.1999999999999997"/><path d="M1343.5 106.8 L1339.5 109.2 L1339.5 104.39999999999999 Z" fill="#8e8e8e"/><line x1="1324" y1="105.3" x2="1316" y2="112.3" stroke="#8e8e8e" stroke-width="3.4"/><path d="M1314.4 113.7 L1314.8 109.2 L1319 113.1 Z" fill="#8e8e8e"/><circle cx="1324" cy="105.3" r="2.6" fill="#8e8e8e"/><g transform="translate(1335.1,92.6)"><path d="M-5.8 -3.2 L0 -6 L5.8 -3.2 L5.8 3.2 L0 6 L-5.8 3.2 Z" fill="#8e8e8e"/><path d="M-5.8 -3.2 L0 -0.2 L5.8 -3.2 M0 -0.2 L0 6" stroke="#fff" stroke-width="0.9" fill="none"/></g><line x1="1364" y1="105.3" x2="1364" y2="89.3" stroke="#8e8e8e" stroke-width="2.9"/><path d="M1364 85.5 L1366.3 89.5 L1361.7 89.5 Z" fill="#8e8e8e"/><line x1="1364" y1="105.3" x2="1379.7" y2="106.6" stroke="#8e8e8e" stroke-width="3.1999999999999997"/><path d="M1383.5 106.8 L1379.5 109.2 L1379.5 104.39999999999999 Z" fill="#8e8e8e"/><line x1="1364" y1="105.3" x2="1356" y2="112.3" stroke="#8e8e8e" stroke-width="3.4"/><path d="M1354.4 113.7 L1354.8 109.2 L1359 113.1 Z" fill="#8e8e8e"/><circle cx="1364" cy="105.3" r="2.6" fill="#8e8e8e"/><rect x="1369" y="90" width="1.8" height="6.9" fill="#8e8e8e"/><rect x="1379.5" y="90" width="1.8" height="6.9" fill="#8e8e8e"/><rect x="1372.2" y="89" width="6.7" height="2.7" fill="#8e8e8e"/><rect x="1374.4" y="88.2" width="1.8" height="4.6" fill="#8e8e8e"/><circle cx="1398.1" cy="87.8" r="2.8" fill="#8e8e8e"/><circle cx="1420" cy="110.5" r="3" fill="#8e8e8e"/><path d="M1398.1 88 Q1399 98 1406 98 Q1418 97 1420 110" fill="none" stroke="#8e8e8e" stroke-width="1.6"/><g fill="none" stroke="#8e8e8e" stroke-width="1.3"><path d="M1462.3 97.9 L1462.3 107.8 L1471.4 112.3 L1480.4 107.8 L1480.4 97.9"/><path d="M1462.3 98.8 L1471.4 103.2 L1480.4 98.8" stroke-width="1.6"/><path d="M1471.4 103 L1471.4 112.3" stroke-width="1.7"/><path d="M1462.3 97.9 L1466.5 95.5 M1480.4 97.9 L1476.3 95.5"/></g><rect x="1469.3" y="83.9" width="3.6" height="9.8" fill="#8e8e8e"/><path d="M1465.6 93.4 L1477.1 93.4 L1471.4 99.4 Z" fill="#8e8e8e"/><rect x="912" y="119" width="50" height="196" rx="3" fill="#dbe8fc"/><rect x="917.5" y="127" width="39.0" height="13" fill="url(#dotp)"/><rect x="917" y="150.3" width="39.6" height="38.9" rx="2" fill="#ffffff"/><rect x="917" y="190.4" width="39.6" height="38.9" rx="2" fill="#ffffff"/><rect x="917" y="230.6" width="39.6" height="38.9" rx="2" fill="#ffffff"/><rect x="917" y="270.7" width="39.6" height="38.9" rx="2" fill="#ffffff"/><line x1="932" y1="175" x2="932" y2="158" stroke="#8e8e8e" stroke-width="1.4"/><path d="M932 156 L934 160 L930 160 Z" fill="#8e8e8e"/><line x1="932" y1="175" x2="949" y2="175.5" stroke="#8e8e8e" stroke-width="1.4"/><path d="M951 175.5 L947 177.5 L947 173.5 Z" fill="#8e8e8e"/><line x1="932" y1="175" x2="925" y2="181" stroke="#8e8e8e" stroke-width="1.4"/><circle cx="932" cy="175" r="1.8" fill="#8e8e8e"/><path d="M928.5 163 Q926.5 167 925.5 173" fill="none" stroke="#d9412e" stroke-width="1.5"/><path d="M937.5 161 Q943 164 946 170" fill="none" stroke="#1f6aa5" stroke-width="1.5"/><path d="M933.5 181 Q939 181.5 944 179" fill="none" stroke="#7dba2f" stroke-width="1.5"/><circle cx="937" cy="209.8" r="5.8" fill="#8e8e8e"/><path d="M934 213.0 L934 206.8 L937 211.0 L940 206.8 L940 213.0" fill="none" stroke="#fff" stroke-width="1.1"/><line x1="931.34" y1="215.46" x2="926.27" y2="220.53" stroke="#8e8e8e" stroke-width="2.3"/><path d="M923.80 223.00 L925.36 217.48 L929.32 221.44 Z" fill="#8e8e8e"/><line x1="942.66" y1="204.14" x2="947.53" y2="199.27" stroke="#8e8e8e" stroke-width="2.3"/><path d="M950.00 196.80 L948.44 202.32 L944.48 198.36 Z" fill="#8e8e8e"/><circle cx="937" cy="249.7" r="5.8" fill="#8e8e8e"/><path d="M934 252.89999999999998 L934 246.7 L937 250.89999999999998 L940 246.7 L940 252.89999999999998" fill="none" stroke="#fff" stroke-width="1.1"/><line x1="931.19" y1="244.20" x2="926.34" y2="239.61" stroke="#8e8e8e" stroke-width="2.3"/><path d="M923.80 237.20 L929.36 238.60 L925.51 242.67 Z" fill="#8e8e8e"/><line x1="942.77" y1="244.16" x2="947.48" y2="239.63" stroke="#8e8e8e" stroke-width="2.3"/><path d="M950.00 237.20 L948.34 242.68 L944.46 238.65 Z" fill="#8e8e8e"/><line x1="931.34" y1="255.36" x2="926.27" y2="260.43" stroke="#8e8e8e" stroke-width="2.3"/><path d="M923.80 262.90 L925.36 257.38 L929.32 261.34 Z" fill="#8e8e8e"/><line x1="942.61" y1="255.40" x2="947.54" y2="260.41" stroke="#8e8e8e" stroke-width="2.3"/><path d="M950.00 262.90 L944.50 261.30 L948.49 257.37 Z" fill="#8e8e8e"/><line x1="924" y1="290" x2="950" y2="290" stroke="#8e8e8e" stroke-width="1.4"/><line x1="936.8" y1="278" x2="936.8" y2="302" stroke="#8e8e8e" stroke-width="1.4"/><circle cx="943.5" cy="280.2" r="2.6" fill="none" stroke="#8e8e8e" stroke-width="1.4"/><path d="M941.5 282 L943.5 286 L945.5 282" fill="#8e8e8e"/><rect x="1735" y="119" width="50" height="436" rx="3" fill="#dbe8fc"/><rect x="1740.5" y="127" width="39.0" height="13.5" fill="url(#dotp)"/><rect x="1740" y="150.2" width="39.5" height="39" rx="2" fill="#ffffff"/><rect x="1740" y="190.26" width="39.5" height="39" rx="2" fill="#ffffff"/><rect x="1740" y="230.32" width="39.5" height="39" rx="2" fill="#ffffff"/><rect x="1740" y="270.38" width="39.5" height="39" rx="2" fill="#ffffff"/><rect x="1740" y="310.44" width="39.5" height="39" rx="2" fill="#ffffff"/><rect x="1740" y="350.5" width="39.5" height="39" rx="2" fill="#ffffff"/><rect x="1740" y="390.56" width="39.5" height="39" rx="2" fill="#ffffff"/><rect x="1740" y="430.62" width="39.5" height="39" rx="2" fill="#ffffff"/><rect x="1740" y="470.68" width="39.5" height="39" rx="2" fill="#ffffff"/><rect x="1740" y="510.74" width="39.5" height="39" rx="2" fill="#ffffff"/><g fill="#8e8e8e"><path d="M1748.2 159.7 L1752.3 156.4 L1755.8 156.4 L1755.8 162.6 L1752.3 162.6 Z"/><rect x="1757.1" y="156.4" width="7.5" height="6.2"/><path d="M1764.3 163.2 L1770.9 163.2 L1766.3 180.7 L1755.8 180.7 Z"/><rect x="1752.3" y="180.7" width="17.5" height="3.5"/><circle cx="1768" cy="159.7" r="4.4" fill="#fff" stroke="#8e8e8e" stroke-width="0.6"/></g><path d="M1753 197 L1764.5 197 L1769 201.5 L1769 222 L1753 222 Z" fill="#8e8e8e"/><rect x="1755.5" y="203.5" width="11" height="1.2" fill="#fff"/><rect x="1755.5" y="206.9" width="11" height="1.2" fill="#fff"/><rect x="1755.5" y="210.3" width="11" height="1.2" fill="#fff"/><rect x="1755.5" y="213.7" width="11" height="1.2" fill="#fff"/><rect x="1755.5" y="217.1" width="11" height="1.2" fill="#fff"/><path d="M1752 244 L1752 256 M1755.5 256 L1759.5 244" stroke="#8e8e8e" stroke-width="1.5" fill="none"/><rect x="1762" y="244" width="6.5" height="12" fill="none" stroke="#8e8e8e" stroke-width="1.5"/><g fill="#8e8e8e"><rect x="1747" y="284" width="4.2" height="15.3"/><rect x="1769" y="284" width="4.2" height="15.3"/><rect x="1752.5" y="282.7" width="14.2" height="3.6"/><rect x="1757.7" y="279.8" width="4.3" height="10"/></g><path d="M1746.2 324.4 L1754.4 316 L1758.5 320.3 L1763 320.1 L1768.8 323.4 L1766.3 324.8 L1771.3 329.3 L1773.7 334.7 L1765.5 326.9 L1756.9 335.9 L1765.5 343.7 L1758.5 340.5 L1753.6 338.4 L1750.7 329.3 Z" fill="#8e8e8e"/><rect x="1747.5" y="359.5" width="24.5" height="2" rx="1" fill="#8e8e8e"/><rect x="1747.5" y="378.5" width="24.5" height="2" rx="1" fill="#8e8e8e"/><line x1="1752.5" y1="364" x2="1752.5" y2="376" stroke="#8e8e8e" stroke-width="1.1"/><path d="M1752.5 362.5 L1754.1 365.5 L1750.9 365.5 Z M1752.5 377.5 L1754.1 374.5 L1750.9 374.5 Z" fill="#8e8e8e"/><line x1="1759.7" y1="364" x2="1759.7" y2="376" stroke="#8e8e8e" stroke-width="1.1"/><path d="M1759.7 362.5 L1761.3 365.5 L1758.1000000000001 365.5 Z M1759.7 377.5 L1761.3 374.5 L1758.1000000000001 374.5 Z" fill="#8e8e8e"/><line x1="1767" y1="364" x2="1767" y2="376" stroke="#8e8e8e" stroke-width="1.1"/><path d="M1767 362.5 L1768.6 365.5 L1765.4 365.5 Z M1767 377.5 L1768.6 374.5 L1765.4 374.5 Z" fill="#8e8e8e"/><g fill="none" stroke="#8e8e8e" stroke-width="1.4"><circle cx="1752.5" cy="416.5" r="5.3"/><circle cx="1752.5" cy="416.5" r="2.6"/><circle cx="1768" cy="401.5" r="3.6"/><circle cx="1768" cy="401.5" r="1.4"/><line x1="1749" y1="411.5" x2="1765" y2="398.5"/><line x1="1757" y1="420" x2="1771" y2="404"/></g><g fill="none" stroke="#8e8e8e" stroke-width="1.4"><rect x="1747" y="441.5" width="22" height="15" rx="1"/><line x1="1751.5" y1="446" x2="1764" y2="446"/><line x1="1751.5" y1="452" x2="1764" y2="452"/></g><rect x="1770" y="445" width="3" height="8" fill="#8e8e8e"/><rect x="1745" y="444" width="1.5" height="10" fill="#8e8e8e"/><rect x="1755" y="439.5" width="5" height="1.5" fill="#8e8e8e"/><g fill="#8e8e8e"><rect x="1748" y="498" width="22" height="2"/><path d="M1753 497.5 L1753 490 Q1753 485.5 1758 485.5 Q1762 485.5 1762 490 L1762 497.5 Z"/><path d="M1760 488 L1769.5 480.5 L1771 482.5 L1762 490 Z"/></g><path d="M1747 527 L1759.5 519 L1759.5 535 L1772 538 L1761 544.5 L1747 540 Z" fill="#8e8e8e"/><g fill="none" stroke="#8e8e8e" stroke-width="2.2"><path d="M917.8 922.5 L917.8 917.8 L922.5 917.8 M951.1 917.8 L955.8 917.8 L955.8 922.5 M955.8 950.4 L955.8 955.1 L951.1 955.1 M922.5 955.1 L917.8 955.1 L917.8 950.4"/><rect x="927" y="926.2" width="19.5" height="20.3" rx="2" stroke-width="2"/></g><rect x="1209" y="912" width="275" height="49.4" rx="3" fill="#dbe8fc"/><rect x="1218" y="918" width="13" height="38.200000000000045" fill="url(#dotp)"/><rect x="1239.2" y="917" width="38.6" height="39.6" rx="2" fill="#ffffff"/><rect x="1279.7" y="917" width="38.6" height="39.6" rx="2" fill="#ffffff"/><rect x="1319.7" y="917" width="38.6" height="39.6" rx="2" fill="#ffffff"/><rect x="1359.9" y="917" width="38.6" height="39.6" rx="2" fill="#ffffff"/><rect x="1399.6" y="917" width="38.6" height="39.6" rx="2" fill="#ffffff"/><rect x="1439.8" y="917" width="38.6" height="39.6" rx="2" fill="#ffffff"/><circle cx="1259" cy="936.8" r="13.6" fill="none" stroke="#8e8e8e" stroke-width="1.5"/><circle cx="1259" cy="936.8" r="9.4" fill="none" stroke="#8e8e8e" stroke-width="1.5"/><line x1="1252" y1="937" x2="1266" y2="937" stroke="#2aa52a" stroke-width="1.5"/><line x1="1259" y1="930" x2="1259" y2="944" stroke="#2aa52a" stroke-width="1.5"/><path d="M1290 929 L1290 945.5 M1293.5 945.5 L1299 929 M1302 929.5 L1308 929.5 L1308 944.5 L1302 944.5 Z" fill="none" stroke="#8e8e8e" stroke-width="1.9"/><path d="M1325.3 929.5 L1333 929.5 M1329.2 929.5 L1329.2 945.5 M1335.5 945.5 L1335.5 929.5 L1342 929.5 L1342 937.5 L1335.5 937.5 M1345.5 929.5 L1352 929.5 L1352 944.5 L1345.5 944.5 Z" fill="none" stroke="#8e8e8e" stroke-width="1.9"/><g fill="#8e8e8e"><rect x="1365.8" y="931.2" width="4.4" height="14.8"/><rect x="1387.8" y="931.2" width="4.3" height="14.8"/><rect x="1372.6" y="929.1" width="13.2" height="5.3"/><rect x="1376.6" y="927.2" width="5" height="9.6"/></g><path d="M1411 945.5 L1411 929.5 L1418 929.5 M1411 937 L1417 937 M1420 929.5 L1428.5 929.5 M1424.3 929.5 L1424.3 945.5" fill="none" stroke="#8e8e8e" stroke-width="1.9"/><path d="M1443.5 945.5 L1443.5 929.5 L1450.5 929.5 L1450.5 937.5 L1443.5 937.5 M1447 937.5 L1451 945.5 M1461 929.5 L1455 929.5 L1455 944.5 L1461 944.5 M1464 945.5 L1464 929.5 L1469.2 940 L1474.2 929.5 L1474.2 945.5" fill="none" stroke="#8e8e8e" stroke-width="1.9"/></svg>
</body></html>
